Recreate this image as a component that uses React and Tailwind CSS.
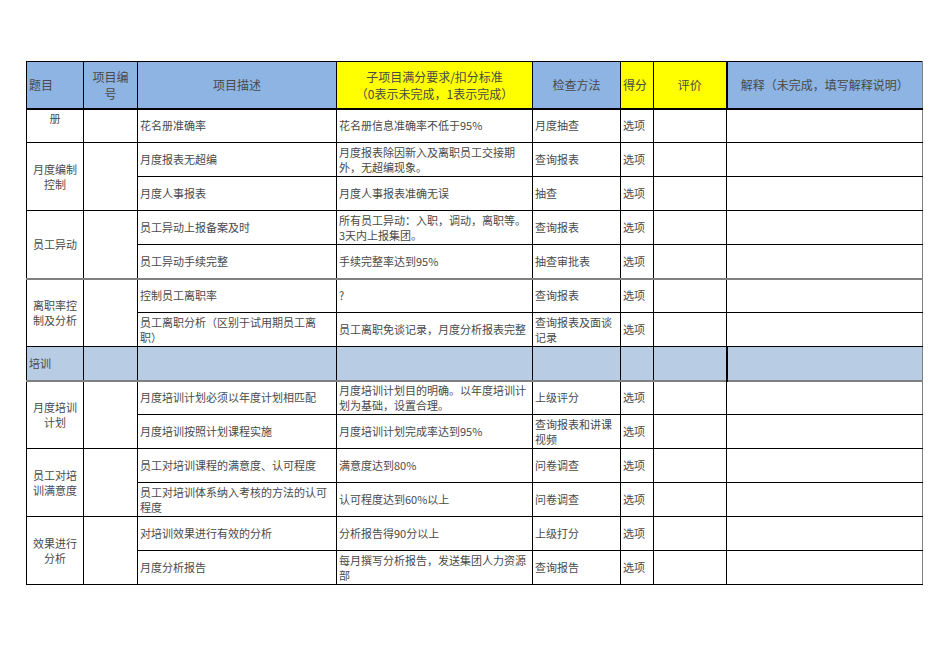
import React from 'react';

const rows = [
    { group: '册', groupTop: true, span: 1, desc: '花名册准确率', std: '花名册信息准确率不低于95%', method: '月度抽查' },
    { group: ['月度编制', '控制'], span: 2, desc: '月度报表无超编', std: ['月度报表除因新入及离职员工交接期', '外，无超编现象。'], method: '查询报表' },
    { desc: '月度人事报表', std: '月度人事报表准确无误', method: '抽查' },
    { group: ['员工异动'], span: 2, desc: '员工异动上报备案及时', std: ['所有员工异动：入职，调动，离职等。', '3天内上报集团。'], method: '查询报表' },
    { desc: '员工异动手续完整', std: '手续完整率达到95%', method: '抽查审批表', gray: true },
    { group: ['离职率控', '制及分析'], span: 2, desc: '控制员工离职率', std: '?', method: '查询报表' },
    { desc: ['员工离职分析（区别于试用期员工离', '职）'], std: '员工离职免谈记录，月度分析报表完整', method: ['查询报表及面谈', '记录'] },
    { section: '培训' },
    { group: ['月度培训', '计划'], span: 2, desc: '月度培训计划必须以年度计划相匹配', std: ['月度培训计划目的明确。以年度培训计', '划为基础，设置合理。'], method: '上级评分' },
    { desc: '月度培训按照计划课程实施', std: '月度培训计划完成率达到95%', method: ['查询报表和讲课', '视频'] },
    { group: ['员工对培', '训满意度'], span: 2, desc: '员工对培训课程的满意度、认可程度', std: '满意度达到80%', method: '问卷调查' },
    { desc: ['员工对培训体系纳入考核的方法的认可', '程度'], std: '认可程度达到60%以上', method: '问卷调查' },
    { group: ['效果进行', '分析'], span: 2, desc: '对培训效果进行有效的分析', std: '分析报告得90分以上', method: '上级打分' },
    { desc: '月度分析报告', std: ['每月撰写分析报告，发送集团人力资源', '部'], method: '查询报告' },
];

function Lines({ v }) {
    if (!Array.isArray(v)) return v;
    return v.map((l, i) => <div key={i}>{l}</div>);
}

const cell = 'border border-black px-[2px] align-middle';

export default function App() {
    return (
        <div className="min-h-screen bg-white pt-[61px] pl-[26px] font-['Noto_Sans_CJK_SC',sans-serif] text-[#4a4a4a]">
            <table className="w-[896px] table-fixed border-collapse text-[11px] leading-[15px]">
                <colgroup>
                    <col className="w-[57px]" />
                    <col className="w-[54px]" />
                    <col className="w-[199px]" />
                    <col className="w-[196px]" />
                    <col className="w-[88px]" />
                    <col className="w-[33px]" />
                    <col className="w-[73px]" />
                    <col className="w-[196px]" />
                </colgroup>
                <thead>
                    <tr className="h-[47px] text-[12px] leading-[17px] border-b-2 border-black">
                        <th className={`${cell} bg-[#8db4e2] text-left font-normal`}>题目</th>
                        <th className={`${cell} bg-[#8db4e2] text-center font-normal`}><div>项目编</div><div>号</div></th>
                        <th className={`${cell} bg-[#8db4e2] text-center font-normal`}>项目描述</th>
                        <th className={`${cell} bg-[#ffff00] text-center font-normal`}><div>子项目满分要求/扣分标准</div><div>（0表示未完成，1表示完成）</div></th>
                        <th className={`${cell} bg-[#8db4e2] text-center font-normal`}>检查方法</th>
                        <th className={`${cell} bg-[#ffff00] text-left font-normal`}>得分</th>
                        <th className={`${cell} bg-[#ffff00] text-center font-normal border-r-2`}>评价</th>
                        <th className={`${cell} bg-[#8db4e2] text-center font-normal border-r-[#808080]`}>解释（未完成，填写解释说明）</th>
                    </tr>
                </thead>
                <tbody>
                    {rows.map((r, i) => {
                        if (r.section) {
                            return (
                                <tr key={i} className="h-[34px] bg-[#b8cce4] border-b-2 border-b-[#808080]">
                                    <td className={`${cell} text-left`}>{r.section}</td>
                                    <td className={cell}></td>
                                    <td className={cell}></td>
                                    <td className={cell}></td>
                                    <td className={cell}></td>
                                    <td className={cell}></td>
                                    <td className={`${cell} border-r-2`}></td>
                                    <td className={`${cell} border-r-[#808080]`}></td>
                                </tr>
                            );
                        }
                        return (
                            <tr key={i} className={`h-[34px] ${r.gray ? 'border-b-2 border-b-[#808080]' : ''}`}>
                                {r.group && (
                                    <td rowSpan={r.span} className={`${cell} text-center ${r.groupTop ? 'align-top pt-[1px]' : ''}`}>
                                        <Lines v={r.group} />
                                    </td>
                                )}
                                {r.group && <td rowSpan={r.span} className={cell}></td>}
                                <td className={cell}><Lines v={r.desc} /></td>
                                <td className={cell}><Lines v={r.std} /></td>
                                <td className={cell}><Lines v={r.method} /></td>
                                <td className={cell}>选项</td>
                                <td className={cell}></td>
                                <td className={`${cell} border-r-[#808080]`}></td>
                            </tr>
                        );
                    })}
                </tbody>
            </table>
        </div>
    );
}
